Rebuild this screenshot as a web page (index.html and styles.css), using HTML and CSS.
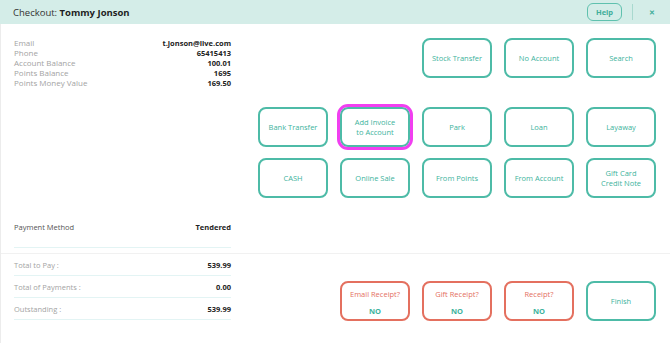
FILE: index.html
```html
<!DOCTYPE html>
<html lang="en">
<head>
    <meta charset="UTF-8">
    <meta name="viewport" content="width=device-width, initial-scale=1.0">
    <title>Checkout</title>
    <link rel="stylesheet" href="styles.css">
</head>
<body>
    <div class="header">
        <div class="title">Checkout: <b>Tommy Jonson</b></div>
        <div class="header-actions">
            <button class="help">Help</button>
            <span class="divider"></span>
            <button class="close">&#x2715;</button>
        </div>
    </div>

    <div class="main">
        <div class="left top-left">
            <div class="info">
                <div class="info-row"><span>Email</span><b>t.jonson@live.com</b></div>
                <div class="info-row"><span>Phone</span><b>65415413</b></div>
                <div class="info-row"><span>Account Balance</span><b>100.01</b></div>
                <div class="info-row"><span>Points Balance</span><b>1695</b></div>
                <div class="info-row"><span>Points Money Value</span><b>169.50</b></div>
            </div>
            <div class="method-row"><span>Payment Method</span><b>Tendered</b></div>
        </div>

        <div class="right top-right">
            <div class="btn-row first">
                <button class="pay start-3">Stock Transfer</button>
                <button class="pay">No Account</button>
                <button class="pay">Search</button>
            </div>
            <div class="btn-group">
                <div class="btn-row">
                    <button class="pay">Bank Transfer</button>
                    <button class="pay focused">Add Invoice<br>to Account</button>
                    <button class="pay">Park</button>
                    <button class="pay">Loan</button>
                    <button class="pay">Layaway</button>
                </div>
                <div class="btn-row">
                    <button class="pay">CASH</button>
                    <button class="pay">Online Sale</button>
                    <button class="pay">From Points</button>
                    <button class="pay">From Account</button>
                    <button class="pay">Gift Card<br>Credit Note</button>
                </div>
            </div>
        </div>

        <div class="split"></div>

        <div class="left totals">
            <div class="total-row"><span>Total to Pay :</span><b>539.99</b></div>
            <div class="total-row"><span>Total of Payments :</span><b>0.00</b></div>
            <div class="total-row"><span>Outstanding :</span><b>539.99</b></div>
        </div>

        <div class="right">
            <div class="btn-row receipts">
                <button class="receipt start-2"><span>Email Receipt?</span><b>NO</b></button>
                <button class="receipt"><span>Gift Receipt?</span><b>NO</b></button>
                <button class="receipt"><span>Receipt?</span><b>NO</b></button>
                <button class="pay">Finish</button>
            </div>
        </div>
    </div>
</body>
</html>
```

FILE: styles.css
```css
* {
    margin: 0;
    padding: 0;
    box-sizing: border-box;
}

body {
    font-family: "Open Sans", Arial, sans-serif;
    background: #fff;
    color: #222;
    width: 670px;
    height: 343px;
    overflow: hidden;
}

button {
    font-family: inherit;
    background: #fff;
    cursor: pointer;
}

.header {
    height: 24px;
    background: #d4ede8;
    display: flex;
    align-items: center;
    justify-content: space-between;
    padding: 0 14px 0 13px;
}

.title {
    font-size: 9.5px;
    color: #333;
}

.title b {
    color: #1e1e1e;
    font-weight: 700;
}

.header-actions {
    display: flex;
    align-items: center;
}

.help {
    width: 35px;
    height: 18px;
    border: 1px solid #5fc1ae;
    border-radius: 6px;
    background: transparent;
    color: #3fae9a;
    font-size: 7.5px;
    font-weight: 700;
}

.divider {
    width: 1px;
    height: 16px;
    background: #a9d9cf;
    margin: 0 15px 0 10px;
}

.close {
    border: none;
    background: transparent;
    color: #3fae9a;
    font-size: 7px;
    font-weight: 700;
    width: 8px;
}

.main {
    display: grid;
    grid-template-columns: 245px 1fr;
    border-left: 1px solid #ececec;
    height: 319px;
    align-content: start;
}

.left {
    padding-left: 13px;
    width: 230px;
}

.right {
    padding-right: 14px;
}

.top-left {
    display: flex;
    flex-direction: column;
    padding-top: 14px;
    height: 229px;
}

.info-row,
.method-row,
.total-row {
    display: flex;
    justify-content: space-between;
    font-size: 7.5px;
    line-height: 10px;
}

.info-row span {
    font-size: 8px;
}

.info-row span,
.total-row span {
    color: #a3a3a3;
}

.method-row span {
    color: #555;
}

.info-row b,
.method-row b,
.total-row b {
    font-weight: 700;
    color: #222;
}

.method-row {
    margin-top: auto;
    padding: 0 0 14px;
    border-bottom: 1px solid #e3f4f4;
    line-height: 12px;
    margin-bottom: 5px;
}

.split {
    grid-column: 1 / 3;
    height: 1px;
    background: #f1f1f1;
}

.total-row {
    height: 22px;
    align-items: center;
    border-bottom: 1px solid #e3f4f4;
}

.btn-row {
    display: grid;
    grid-template-columns: repeat(5, 70px);
    column-gap: 12px;
    justify-content: end;
}

.btn-row.first {
    margin-top: 14px;
}

.btn-group {
    margin-top: 29px;
    display: flex;
    flex-direction: column;
    gap: 11px;
}

.receipts {
    margin-top: 27px;
}

.start-2 {
    grid-column-start: 2;
}

.start-3 {
    grid-column-start: 3;
}

.pay,
.receipt {
    height: 40px;
    border: 2px solid #4dbba7;
    border-radius: 8px;
    color: #3db39d;
    font-size: 7.5px;
    font-weight: 500;
    line-height: 10px;
}

.focused {
    outline: 3px solid #f13ff0;
}

.receipt {
    border-color: #e4705f;
    color: #e4705f;
    display: flex;
    flex-direction: column;
    align-items: center;
    justify-content: center;
    gap: 7px;
    padding-top: 2px;
}

.receipt b {
    color: #3db39d;
    font-weight: 700;
}
```
